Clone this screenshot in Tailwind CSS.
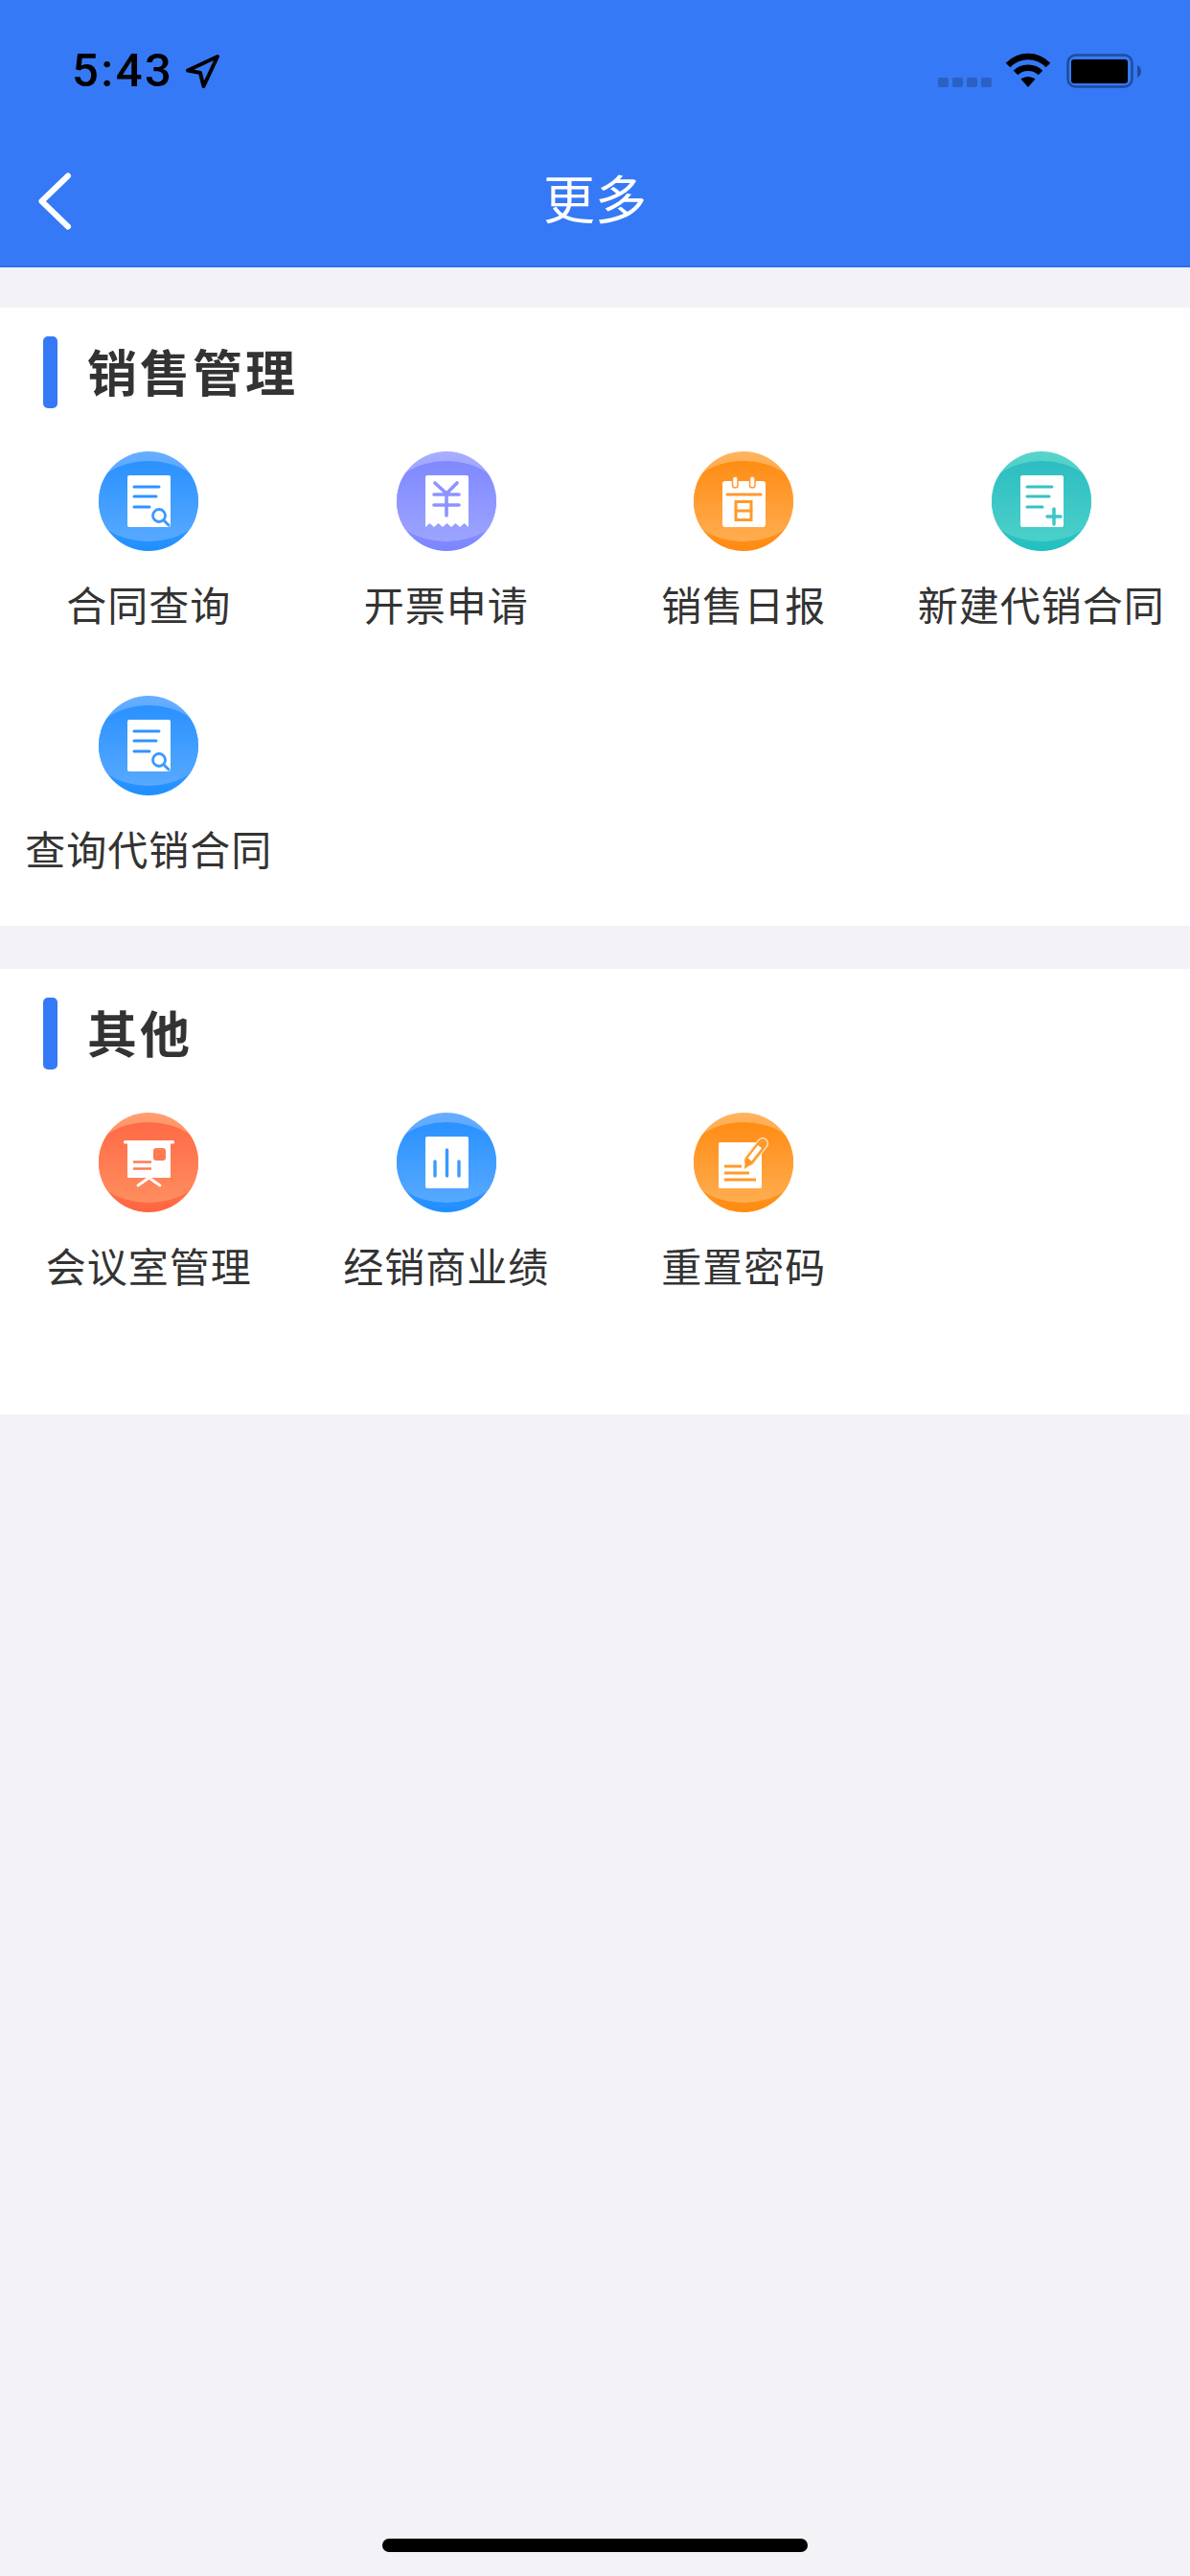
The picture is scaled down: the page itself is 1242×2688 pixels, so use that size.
<!DOCTYPE html>
<html lang="zh-CN">
<head>
    <meta charset="UTF-8">
    <meta name="viewport" content="width=device-width, initial-scale=1.0">
    <title>更多</title>
    <script src="https://cdn.jsdelivr.net/npm/@tailwindcss/browser@4"></script>
</head>
<body class="bg-[#f2f2f7] font-['Noto_Sans_CJK_SC','Noto_Sans',sans-serif]">
    <!-- Shared gradients for the round icons -->
    <svg class="absolute w-0 h-0" aria-hidden="true">
        <defs>
            <clipPath id="disc"><circle cx="52" cy="52" r="52"/></clipPath>
            <linearGradient id="blue-rim" x1="0" y1="0" x2="0" y2="1"><stop offset="0" stop-color="#69aeff"/><stop offset="1" stop-color="#1e8fff"/></linearGradient>
            <linearGradient id="blue-face" x1="0" y1="0" x2="0" y2="1"><stop offset="0" stop-color="#2a91ff"/><stop offset="1" stop-color="#57a9ff"/></linearGradient>
            <linearGradient id="violet-rim" x1="0" y1="0" x2="0" y2="1"><stop offset="0" stop-color="#a8aeff"/><stop offset="1" stop-color="#7b85ff"/></linearGradient>
            <linearGradient id="violet-face" x1="0" y1="0" x2="0" y2="1"><stop offset="0" stop-color="#7f88ff"/><stop offset="1" stop-color="#9ca4ff"/></linearGradient>
            <linearGradient id="orange-rim" x1="0" y1="0" x2="0" y2="1"><stop offset="0" stop-color="#ffb45e"/><stop offset="1" stop-color="#ff8a0f"/></linearGradient>
            <linearGradient id="orange-face" x1="0" y1="0" x2="0" y2="1"><stop offset="0" stop-color="#ff8c14"/><stop offset="1" stop-color="#ffad50"/></linearGradient>
            <linearGradient id="teal-rim" x1="0" y1="0" x2="0" y2="1"><stop offset="0" stop-color="#58d4cc"/><stop offset="1" stop-color="#22bfc0"/></linearGradient>
            <linearGradient id="teal-face" x1="0" y1="0" x2="0" y2="1"><stop offset="0" stop-color="#2dbdc1"/><stop offset="1" stop-color="#4cd0c9"/></linearGradient>
            <linearGradient id="coral-rim" x1="0" y1="0" x2="0" y2="1"><stop offset="0" stop-color="#ff9f70"/><stop offset="1" stop-color="#ff6440"/></linearGradient>
            <linearGradient id="coral-face" x1="0" y1="0" x2="0" y2="1"><stop offset="0" stop-color="#ff6a47"/><stop offset="1" stop-color="#ff8e5e"/></linearGradient>
        </defs>
    </svg>

    <div class="min-h-screen flex flex-col">
        <!-- Header -->
        <header class="h-[279px] bg-[#3579f6] border-b-2 border-[#2a70f5] text-white">
            <div class="h-[139px] relative">
                <span class="absolute left-[75px] top-[44px] font-['Roboto'] font-medium text-[49px] leading-[60px] tracking-[2.500px] text-black">5:43</span>
                <svg class="absolute left-[193px] top-[56px] w-[38px] h-[37px]" viewBox="0 0 38 37" fill="none" stroke="#000" stroke-width="4" stroke-linejoin="round"><path d="M34 3 L3 17.500 L16 20 L19.500 34 Z"/></svg>
                <div class="absolute left-[979px] top-[81px] flex gap-[4px]">
                    <i class="w-[11px] h-[10px] rounded-[2px] bg-[#2c60c4]"></i>
                    <i class="w-[11px] h-[10px] rounded-[2px] bg-[#2c60c4]"></i>
                    <i class="w-[11px] h-[10px] rounded-[2px] bg-[#2c60c4]"></i>
                    <i class="w-[11px] h-[10px] rounded-[2px] bg-[#2c60c4]"></i>
                </div>
                <svg class="absolute left-[1049px] top-[55px] w-[48px] h-[36px]" viewBox="0 0 48 36" fill="none" stroke="#000" stroke-width="6.500"><path d="M3 13 C15 1 33 1 45 13"/><path d="M11 21 C18 14 30 14 37 21"/><path d="M24 36 L16.500 27.500 C21 24 27 24 31.500 27.500 Z" fill="#000" stroke="none"/></svg>
                <svg class="absolute left-[1112px] top-[55px] w-[80px] h-[38px]" viewBox="0 0 80 38"><rect x="2.500" y="2.500" width="67" height="33" rx="8" fill="none" stroke="#1f4c9c" stroke-width="2.500"/><rect x="6" y="7" width="59" height="25" rx="3" fill="#000"/><path d="M75 13 C77 14 79 16 79 19.500 C79 23 77 25 75 26 Z" fill="#1f4c9c"/></svg>
            </div>
            <div class="h-[138px] relative flex items-center justify-center">
                <svg class="absolute left-[38px] top-[41px] w-[38px] h-[60px]" viewBox="0 0 38 60" fill="none" stroke="#fff" stroke-width="6" stroke-linecap="round" stroke-linejoin="round"><path d="M33 3.500 L5.500 30 L33 56.500"/></svg>
                <h1 class="text-[54px] leading-[60px] font-normal text-white relative top-[-2px]">更多</h1>
            </div>
        </header>

        <!-- 销售管理 -->
        <section class="bg-white mt-[42px] pt-[30px] pb-[51px]">
            <div class="flex items-center gap-[31px] pl-[45px] h-[75px]">
                <span class="w-[15px] h-[75px] rounded-[5px] bg-[#3579f6]"></span>
                <h2 class="text-[52px] leading-[72px] mb-[3px] font-bold tracking-[3px] text-[#333]">销售管理</h2>
            </div>
            <div class="grid grid-cols-4 gap-y-[66px] mt-[45px] text-center">
                <div class="flex flex-col items-center">
                    <svg class="w-[104px] h-[104px]" viewBox="0 0 104 104">
                        <circle cx="52" cy="52" r="52" fill="url(#blue-rim)"/>
                        <ellipse cx="52" cy="52" rx="60" ry="42" fill="url(#blue-face)" clip-path="url(#disc)"/>
                        <rect x="30" y="25" width="45" height="54" rx="2" fill="#fff"/>
                        <path d="M37 37H63M37 47H60M37 58H53" stroke="#2f94ff" stroke-width="3" stroke-linecap="round"/>
                        <circle cx="63" cy="67" r="6.500" fill="#fff" stroke="#3b9aff" stroke-width="2.800"/>
                        <path d="M68 72L73 77" stroke="#3b9aff" stroke-width="3" stroke-linecap="round"/>
                    </svg>
                    <span class="mt-[25px] text-[42px] leading-[60px] tracking-[1px] text-[#333] whitespace-nowrap">合同查询</span>
                </div>
                <div class="flex flex-col items-center">
                    <svg class="w-[104px] h-[104px]" viewBox="0 0 104 104">
                        <circle cx="52" cy="52" r="52" fill="url(#violet-rim)"/>
                        <ellipse cx="52" cy="52" rx="60" ry="42" fill="url(#violet-face)" clip-path="url(#disc)"/>
                        <path d="M32 25H73A2 2 0 0 1 75 27V79L70.500 75 66 79 61.500 75 57 79 52.500 75 48 79 43.500 75 39 79 34.500 75 30 79V27A2 2 0 0 1 32 25Z" fill="#fff"/>
                        <path d="M40 33L52 44 63 33M39 45H65M39 56H65M52 44V67" fill="none" stroke="#8d94ff" stroke-width="3.600" stroke-linecap="round" stroke-linejoin="round"/>
                    </svg>
                    <span class="mt-[25px] text-[42px] leading-[60px] tracking-[1px] text-[#333] whitespace-nowrap">开票申请</span>
                </div>
                <div class="flex flex-col items-center">
                    <svg class="w-[104px] h-[104px]" viewBox="0 0 104 104">
                        <circle cx="52" cy="52" r="52" fill="url(#orange-rim)"/>
                        <ellipse cx="52" cy="52" rx="60" ry="42" fill="url(#orange-face)" clip-path="url(#disc)"/>
                        <rect x="30" y="31" width="45" height="48" rx="3" fill="#fff"/>
                        <rect x="40.500" y="26" width="5.500" height="12" rx="2.750" fill="#fff" stroke="#ff9a2c" stroke-width="1.500"/>
                        <rect x="58.500" y="26" width="5.500" height="12" rx="2.750" fill="#fff" stroke="#ff9a2c" stroke-width="1.500"/>
                        <path d="M35 45H70M44 62H60" stroke="#ff9a2c" stroke-width="3" stroke-linecap="round"/>
                        <rect x="44" y="52.500" width="16" height="19" fill="none" stroke="#ff9a2c" stroke-width="3"/>
                    </svg>
                    <span class="mt-[25px] text-[42px] leading-[60px] tracking-[1px] text-[#333] whitespace-nowrap">销售日报</span>
                </div>
                <div class="flex flex-col items-center">
                    <svg class="w-[104px] h-[104px]" viewBox="0 0 104 104">
                        <circle cx="52" cy="52" r="52" fill="url(#teal-rim)"/>
                        <ellipse cx="52" cy="52" rx="60" ry="42" fill="url(#teal-face)" clip-path="url(#disc)"/>
                        <rect x="30" y="25" width="45" height="54" rx="2" fill="#fff"/>
                        <path d="M37 37H63M37 47H60M37 58H53" stroke="#33c3c3" stroke-width="3" stroke-linecap="round"/>
                        <path d="M58 68H72M65 60V76" stroke="#3ac7c5" stroke-width="3.500" stroke-linecap="round"/>
                    </svg>
                    <span class="mt-[25px] text-[42px] leading-[60px] tracking-[1px] text-[#333] whitespace-nowrap">新建代销合同</span>
                </div>
                <div class="flex flex-col items-center">
                    <svg class="w-[104px] h-[104px]" viewBox="0 0 104 104">
                        <circle cx="52" cy="52" r="52" fill="url(#blue-rim)"/>
                        <ellipse cx="52" cy="52" rx="60" ry="42" fill="url(#blue-face)" clip-path="url(#disc)"/>
                        <rect x="30" y="25" width="45" height="54" rx="2" fill="#fff"/>
                        <path d="M37 37H63M37 47H60M37 58H53" stroke="#2f94ff" stroke-width="3" stroke-linecap="round"/>
                        <circle cx="63" cy="67" r="6.500" fill="#fff" stroke="#3b9aff" stroke-width="2.800"/>
                        <path d="M68 72L73 77" stroke="#3b9aff" stroke-width="3" stroke-linecap="round"/>
                    </svg>
                    <span class="mt-[25px] text-[42px] leading-[60px] tracking-[1px] text-[#333] whitespace-nowrap">查询代销合同</span>
                </div>
            </div>
        </section>

        <!-- 其他 -->
        <section class="bg-white mt-[45px] pt-[30px] pb-[126px]">
            <div class="flex items-center gap-[31px] pl-[45px] h-[75px]">
                <span class="w-[15px] h-[75px] rounded-[5px] bg-[#3579f6]"></span>
                <h2 class="text-[52px] leading-[72px] mb-[3px] font-bold tracking-[3px] text-[#333]">其他</h2>
            </div>
            <div class="grid grid-cols-4 mt-[45px] text-center">
                <div class="flex flex-col items-center">
                    <svg class="w-[104px] h-[104px]" viewBox="0 0 104 104">
                        <circle cx="52" cy="52" r="52" fill="url(#coral-rim)"/>
                        <ellipse cx="52" cy="52" rx="60" ry="42" fill="url(#coral-face)" clip-path="url(#disc)"/>
                        <rect x="26" y="29" width="53" height="3.500" rx="1.500" fill="#fff"/>
                        <rect x="30" y="31" width="45" height="37" fill="#fff" rx="1"/>
                        <rect x="57" y="37" width="13" height="13" rx="3" fill="#ff7a52"/>
                        <path d="M36 51.500H55M36 58.500H55" stroke="#ff7a52" stroke-width="2.500"/>
                        <path d="M52.500 68L41 76M52.500 68L64 76" fill="none" stroke="#fff" stroke-width="2.800" stroke-linecap="round"/>
                    </svg>
                    <span class="mt-[25px] text-[42px] leading-[60px] tracking-[1px] text-[#333] whitespace-nowrap">会议室管理</span>
                </div>
                <div class="flex flex-col items-center">
                    <svg class="w-[104px] h-[104px]" viewBox="0 0 104 104">
                        <circle cx="52" cy="52" r="52" fill="url(#blue-rim)"/>
                        <ellipse cx="52" cy="52" rx="60" ry="42" fill="url(#blue-face)" clip-path="url(#disc)"/>
                        <rect x="30" y="25" width="45" height="54" rx="2" fill="#fff"/>
                        <path d="M40 51V66M52.500 39V66M65 51V66" stroke="#3b9aff" stroke-width="3.400" stroke-linecap="round"/>
                    </svg>
                    <span class="mt-[25px] text-[42px] leading-[60px] tracking-[1px] text-[#333] whitespace-nowrap">经销商业绩</span>
                </div>
                <div class="flex flex-col items-center">
                    <svg class="w-[104px] h-[104px]" viewBox="0 0 104 104">
                        <circle cx="52" cy="52" r="52" fill="url(#orange-rim)"/>
                        <ellipse cx="52" cy="52" rx="60" ry="42" fill="url(#orange-face)" clip-path="url(#disc)"/>
                        <rect x="26" y="31" width="45" height="48" rx="1.500" fill="#fff"/>
                        <path d="M32 56H50M32 63H58M32 70H65" stroke="#ff9a2c" stroke-width="2.800"/>
                        <path d="M58 50L72 32" stroke="#ffe6c8" stroke-width="12" stroke-linecap="round"/>
                        <path d="M58 50L72 32" stroke="#ff9a2c" stroke-width="9.500" stroke-linecap="round"/>
                        <path d="M58.500 49L69 35.500" stroke="#fff" stroke-width="5"/>
                        <path d="M53 59L54 48 61 53Z" fill="#ff9a2c"/>
                    </svg>
                    <span class="mt-[25px] text-[42px] leading-[60px] tracking-[1px] text-[#333] whitespace-nowrap">重置密码</span>
                </div>
            </div>
        </section>

        <!-- Home indicator -->
        <div class="mt-auto pb-[25px] flex justify-center">
            <span class="w-[444px] h-[14px] rounded-[7px] bg-black"></span>
        </div>
    </div>
</body>
</html>
